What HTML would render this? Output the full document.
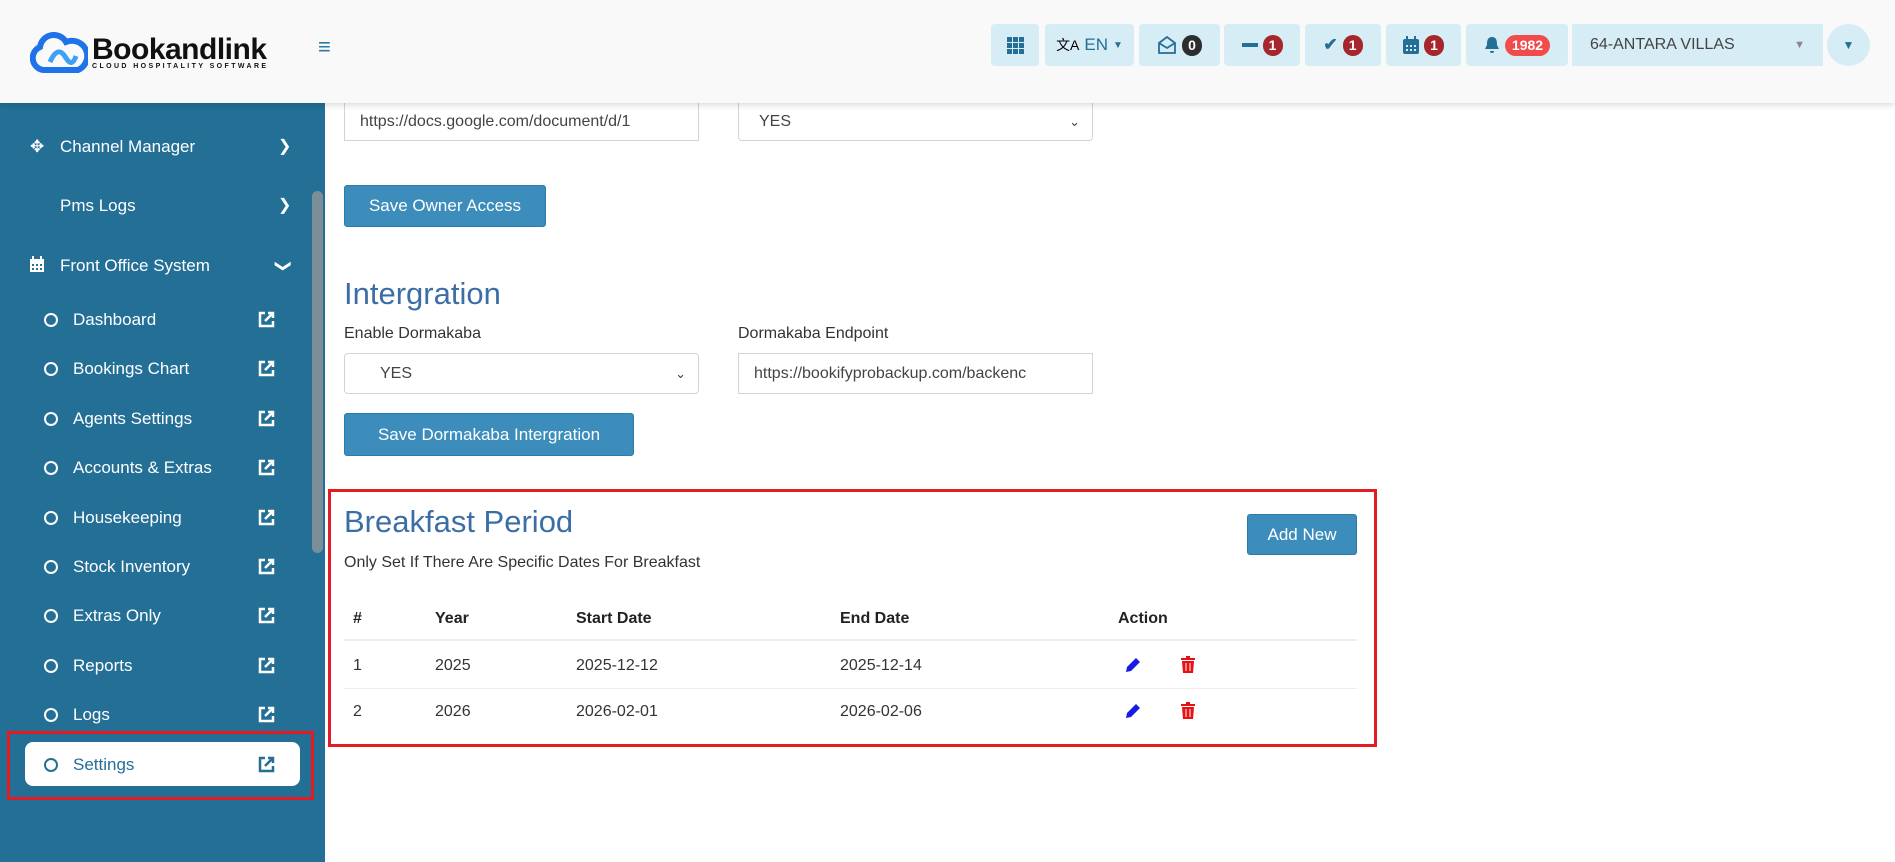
<!DOCTYPE html>
<html><head><meta charset="utf-8"><style>
*{box-sizing:border-box;margin:0;padding:0}
body{width:1895px;height:862px;overflow:hidden;background:#fff;font-family:"Liberation Sans",sans-serif;position:relative;color:#333}
.hdr{position:absolute;left:0;top:0;width:1895px;height:103px;background:#f9f9f9;box-shadow:0 2px 6px rgba(0,0,0,.15);z-index:5}
.side{position:absolute;left:0;top:103px;width:325px;height:759px;background:#236f96;color:#fff}
.si{position:absolute;left:0;width:325px;font-size:17px;line-height:20px}
.si .ic{position:absolute;left:30px;top:0}
.si .tx{position:absolute;left:60px;top:0}
.si .ch{position:absolute;left:278px;top:0;font-size:16px}
.sub .cir{position:absolute;left:44px;top:3px;width:14px;height:14px;border:2px solid #fff;border-radius:50%}
.sub .tx{left:73px}
.sub .ext{position:absolute;left:258px;top:1px}
.tb{position:absolute;top:24px;height:42px;background:#d6edf5;border-radius:4px;color:#236f96;font-size:17px;display:flex;align-items:center;justify-content:center;gap:5px}
.bd{display:inline-block;background:#a5262b;color:#fff;font-weight:bold;font-size:14px;border-radius:10px;min-width:20px;height:21px;line-height:21px;text-align:center;padding:0 5px}
.btn{position:absolute;background:#3c8dbc;color:#fff;font-size:17px;border-radius:3px;border:1px solid #2e7bab;display:flex;align-items:center;justify-content:center}
.inp{position:absolute;border:1px solid #ced4da;background:#fff;font-size:16px;color:#444;padding-left:15px;display:flex;align-items:center;overflow:hidden;white-space:nowrap}
h2{position:absolute;font-weight:normal;color:#3c6ea6;font-size:31px}
.lbl{position:absolute;font-size:16px;color:#333}
.th{position:absolute;font-weight:bold;font-size:16px;color:#222;top:610px}
.td{position:absolute;font-size:16px;color:#333}
</style></head><body>
<div class="hdr">
 <svg style="position:absolute;left:30px;top:32px" width="58" height="42" viewBox="0 0 58 42"><path d="M14 38 A12 12 0 0 1 10 15 A14 14 0 0 1 36 10 A13 13 0 0 1 48 38 Z" fill="none" stroke="#1e73e8" stroke-width="6"/><path d="M20 30 Q28 12 36 26 Q42 36 46 24" fill="none" stroke="#3fa0f5" stroke-width="5"/></svg>
 <div style="position:absolute;left:92px;top:33px;font-size:30px;font-weight:bold;color:#111;letter-spacing:-0.5px">Bookandlink</div>
 <div style="position:absolute;left:92px;top:63px;font-size:7px;font-weight:bold;color:#111;letter-spacing:2.4px">CLOUD HOSPITALITY SOFTWARE</div>
 <div style="position:absolute;left:318px;top:34px;font-size:22px;color:#2a7aa8">&#8801;</div>
 <div class="tb" style="left:991px;width:48px"><svg width="17" height="17"><g fill="#236f96"><rect x="0" y="0" width="5" height="5"/><rect x="6" y="0" width="5" height="5"/><rect x="12" y="0" width="5" height="5"/><rect x="0" y="6" width="5" height="5"/><rect x="6" y="6" width="5" height="5"/><rect x="12" y="6" width="5" height="5"/><rect x="0" y="12" width="5" height="5"/><rect x="6" y="12" width="5" height="5"/><rect x="12" y="12" width="5" height="5"/></g></svg></div>
 <div class="tb" style="left:1045px;width:89px"><span style="color:#000;font-size:14px">文A</span>EN <span style="font-size:10px">&#9660;</span></div>
 <div class="tb" style="left:1139px;width:81px"><svg width="20" height="20" viewBox="0 0 20 20"><path d="M2 8 L10 2 L18 8 V18 H2 Z M2 8 L10 13 L18 8" fill="none" stroke="#236f96" stroke-width="1.8"/></svg><span class="bd" style="background:#2d2d2d">0</span></div>
 <div class="tb" style="left:1224px;width:76px"><span style="display:inline-block;width:16px;height:4px;background:#236f96"></span><span class="bd">1</span></div>
 <div class="tb" style="left:1305px;width:76px"><span style="font-weight:bold">&#10004;</span><span class="bd">1</span></div>
 <div class="tb" style="left:1386px;width:75px"><svg width="16" height="18"><rect x="0" y="3" width="16" height="15" rx="2" fill="#236f96"/><rect x="3" y="0" width="2" height="5" fill="#236f96"/><rect x="11" y="0" width="2" height="5" fill="#236f96"/><g fill="#d6edf5"><rect x="3" y="9" width="2" height="2"/><rect x="7" y="9" width="2" height="2"/><rect x="11" y="9" width="2" height="2"/><rect x="3" y="13" width="2" height="2"/><rect x="7" y="13" width="2" height="2"/><rect x="11" y="13" width="2" height="2"/></g></svg><span class="bd">1</span></div>
 <div class="tb" style="left:1466px;width:102px"><svg width="16" height="18" viewBox="0 0 16 18"><path d="M8 1 C3 1 3 6 3 9 L1 13 H15 L13 9 C13 6 13 1 8 1Z M6 15 A2 2 0 0 0 10 15Z" fill="#236f96"/></svg><span class="bd" style="background:#f24b4b;border-radius:11px;padding:0 7px">1982</span></div>
 <div class="tb" style="left:1572px;width:251px;border-radius:0;justify-content:flex-start;padding-left:18px;color:#444;font-size:16px">64-ANTARA VILLAS<span style="position:absolute;right:18px;color:#888;font-size:11px">&#9660;</span></div>
 <div class="tb" style="left:1827px;width:43px;border-radius:50%;font-size:12px">&#9660;</div>
</div>

<div class="side">
 <div style="position:absolute;left:312px;top:88px;width:11px;height:362px;background:#7c8f99;border-radius:6px"></div>
 <div class="si" style="top:34px"><span class="ic">&#10021;</span><span class="tx">Channel Manager</span><span class="ch">&#10095;</span></div>
 <div class="si" style="top:93px"><span class="tx">Pms Logs</span><span class="ch">&#10095;</span></div>
 <div class="si" style="top:153px"><span class="ic"><svg width="14" height="16"><rect x="0" y="3" width="14" height="13" fill="#fff"/><rect x="2" y="0" width="2" height="4" fill="#fff"/><rect x="10" y="0" width="2" height="4" fill="#fff"/><g fill="#236f96"><rect x="2" y="8" width="2" height="2"/><rect x="6" y="8" width="2" height="2"/><rect x="10" y="8" width="2" height="2"/><rect x="2" y="12" width="2" height="2"/><rect x="6" y="12" width="2" height="2"/><rect x="10" y="12" width="2" height="2"/></g></svg></span><span class="tx">Front Office System</span><span class="ch" style="transform:rotate(90deg);left:276px">&#10095;</span></div>
</div>
<div style="position:absolute;left:25px;top:742px;width:275px;height:44px;background:#fff;border-radius:8px"></div>
<div style="position:absolute;left:7px;top:731px;width:307px;height:69px;border:3px solid #e31b23"></div>
<div id="subs"></div>
<script>
var n=["Dashboard","Bookings Chart","Agents Settings","Accounts & Extras","Housekeeping","Stock Inventory","Extras Only","Reports","Logs","Settings"];
var h="";n.forEach(function(t,i){var y=310+i*49.4;var c=i==9?"#236f96":"#fff";
h+='<div class="si sub" style="top:'+y+'px;color:'+c+'"><span class="cir" style="border-color:'+c+'"></span><span class="tx">'+t.replace("&","&amp;")+'</span><svg class="ext" width="17" height="17" viewBox="0 0 17 17"><path d="M7 2H2V15H15V10" fill="none" stroke="'+c+'" stroke-width="2.5"/><path d="M7 10L15 2M10 2H15V7" fill="none" stroke="'+c+'" stroke-width="2.5"/></svg></div>';});
document.getElementById("subs").innerHTML=h;
</script>

<div class="inp" style="left:344px;top:100px;width:355px;height:41px;border-top:none;padding-top:4px">https://docs.google.com/document/d/1</div>
<div class="inp" style="left:738px;top:100px;width:355px;height:41px;border-top:none;border-radius:0 0 4px 4px;padding-top:4px;padding-left:20px">YES<span style="position:absolute;right:12px;font-size:13px">&#8964;</span></div>
<div class="btn" style="left:344px;top:185px;width:202px;height:42px">Save Owner Access</div>
<h2 style="left:344px;top:276px">Intergration</h2>
<div class="lbl" style="left:344px;top:325px">Enable Dormakaba</div>
<div class="lbl" style="left:738px;top:325px">Dormakaba Endpoint</div>
<div class="inp" style="left:344px;top:353px;width:355px;height:41px;border-radius:4px;padding-left:35px">YES<span style="position:absolute;right:12px;font-size:13px">&#8964;</span></div>
<div class="inp" style="left:738px;top:353px;width:355px;height:41px">https://bookifyprobackup.com/backenc</div>
<div class="btn" style="left:344px;top:413px;width:290px;height:43px">Save Dormakaba Intergration</div>

<div style="position:absolute;left:328px;top:489px;width:1049px;height:258px;border:3px solid #e31b23"></div>
<h2 style="left:344px;top:504px">Breakfast Period</h2>
<div class="btn" style="left:1247px;top:514px;width:110px;height:41px">Add New</div>
<div class="lbl" style="left:344px;top:554px">Only Set If There Are Specific Dates For Breakfast</div>
<div class="th" style="left:353px">#</div><div class="th" style="left:435px">Year</div><div class="th" style="left:576px">Start Date</div><div class="th" style="left:840px">End Date</div><div class="th" style="left:1118px">Action</div>
<div style="position:absolute;left:344px;top:639px;width:1013px;height:2px;background:#eee"></div>
<div style="position:absolute;left:344px;top:688px;width:1013px;height:1px;background:#eee"></div>
<div class="td" style="left:353px;top:657px">1</div><div class="td" style="left:435px;top:657px">2025</div><div class="td" style="left:576px;top:657px">2025-12-12</div><div class="td" style="left:840px;top:657px">2025-12-14</div>
<div class="td" style="left:353px;top:703px">2</div><div class="td" style="left:435px;top:703px">2026</div><div class="td" style="left:576px;top:703px">2026-02-01</div><div class="td" style="left:840px;top:703px">2026-02-06</div>
<svg style="position:absolute;left:1124px;top:656px" width="18" height="18" viewBox="0 0 18 18"><path d="M2 16 L3 11 L12 2 L16 6 L7 15 Z" fill="#1a1ae6"/></svg>
<svg style="position:absolute;left:1124px;top:702px" width="18" height="18" viewBox="0 0 18 18"><path d="M2 16 L3 11 L12 2 L16 6 L7 15 Z" fill="#1a1ae6"/></svg>
<svg style="position:absolute;left:1181px;top:656px" width="14" height="17" viewBox="0 0 14 17"><path d="M0 2H14V4H0Z M5 0H9V2H5Z M1 5H13L12 17H2Z" fill="#e81010"/><path d="M5 7V15M9 7V15" stroke="#fff" stroke-width="1"/></svg>
<svg style="position:absolute;left:1181px;top:702px" width="14" height="17" viewBox="0 0 14 17"><path d="M0 2H14V4H0Z M5 0H9V2H5Z M1 5H13L12 17H2Z" fill="#e81010"/><path d="M5 7V15M9 7V15" stroke="#fff" stroke-width="1"/></svg>
</body></html>
